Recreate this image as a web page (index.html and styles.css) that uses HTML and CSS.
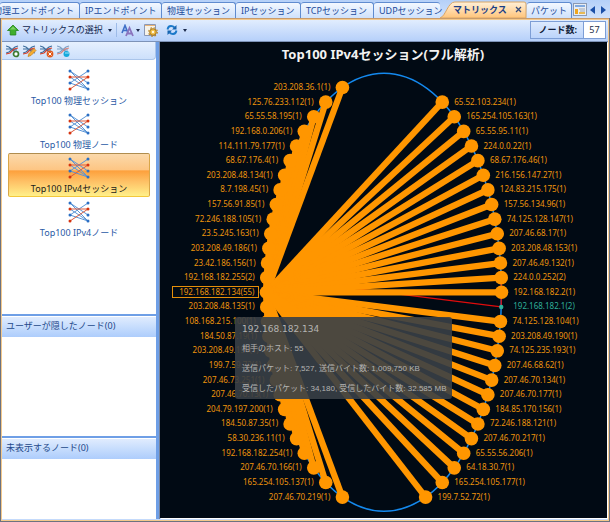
FILE: index.html
```html
<!DOCTYPE html>
<html lang="ja">
<head>
<meta charset="utf-8">
<title>マトリックス</title>
<link rel="stylesheet" href="styles.css">
</head>
<body>
<svg class="defs" aria-hidden="true">
  <symbol id="matrix" viewBox="0 0 22 22">
    <g fill="none" stroke="#5b95d6" stroke-width="1">
      <path d="M2 2 20 20M2 8 20 20M2 14 20 2M2 14 20 20M2 2 20 14"/>
      <path d="M2 8H20M2 20 20 8" stroke="#dc5a3c"/>
    </g>
    <g fill="#2b6fc4"><circle cx="2" cy="2" r="1.5"/><circle cx="20" cy="2" r="1.5"/><circle cx="2" cy="14" r="1.5"/><circle cx="20" cy="14" r="1.5"/><circle cx="20" cy="20" r="1.5"/></g>
    <g fill="#d6330f"><circle cx="2" cy="8" r="1.5"/><circle cx="20" cy="8" r="1.5"/><circle cx="2" cy="20" r="1.5"/></g>
  </symbol>
  <symbol id="mini" viewBox="0 0 14 14">
    <path d="M0 2 3 3 9 8 12 9M0 9 3 8 9 3 12 2M0 5 4 5 11 6" fill="none" stroke="#3d6d9c" stroke-width="1.1"/>
    <path d="M0 10 4 9 8 5 12 4" fill="none" stroke="#d8402a" stroke-width="1.2"/>
  </symbol>
</svg>
<div class="window">
  <nav class="tabs">
    <button class="tab first">物理エンドポイント</button>
    <button class="tab">IPエンドポイント</button>
    <button class="tab">物理セッション</button>
    <button class="tab">IPセッション</button>
    <button class="tab">TCPセッション</button>
    <button class="tab open">UDPセッション</button>
    <button class="tab active">
      <svg class="tab-shape" viewBox="0 0 88 17" preserveAspectRatio="none" aria-hidden="true">
        <defs><linearGradient id="tabFill" x1="0" y1="0" x2="0" y2="1"><stop offset="0" stop-color="#fff0d8"/><stop offset="1" stop-color="#ffc47a"/></linearGradient></defs>
        <path d="M0 17C6 15 8 1 15 1H85Q87 1 87 3V17Z" fill="url(#tabFill)" stroke="#d9a566"/>
      </svg>
      <span>マトリックス</span>
      <svg class="close" viewBox="0 0 7 7" aria-hidden="true"><path d="M1 1 6 6M6 1 1 6" stroke="#334a7c" stroke-width="1.3"/></svg>
    </button>
    <button class="tab packet">パケット</button>
    <button class="tab-list" aria-label="タブ一覧">
      <svg viewBox="0 0 14 13"><rect x=".5" y=".5" width="13" height="12" fill="#e9edf3" stroke="#8c9ab3"/><path d="M2 3H12" stroke="#7fa9e0" stroke-width="2"/><path d="M6 6H12M7 8H12" stroke="#9aa6b8"/><path d="M2 6H5V11H2Z" fill="#efa51e"/><path d="M6 10H12" stroke="#e8b954" stroke-width="2"/></svg>
    </button>
    <div class="scroll">
      <button aria-label="前へ"><svg viewBox="0 0 5 8"><path d="M5 0V8L0 4Z" fill="#1a4fa8"/></svg></button>
      <button aria-label="次へ"><svg viewBox="0 0 5 8"><path d="M0 0V8L5 4Z" fill="#1a4fa8"/></svg></button>
    </div>
  </nav>

  <div class="frame">
    <div class="toolbar">
      <button class="tool choose">
        <svg class="i12" viewBox="0 0 12 12" aria-hidden="true"><path d="M6 1 11.5 6.5H8.8V11H3.2V6.5H.5Z" fill="#3fae2b" stroke="#23831a" stroke-width=".8"/><path d="M6 2.5 9 5.5H3Z" fill="#7ed268"/></svg>
        <span>マトリックスの選択</span>
        <i class="caret"></i>
      </button>
      <i class="divider"></i>
      <button class="tool" aria-label="フォント">
        <svg class="i13" viewBox="0 0 13 13"><path d="M1 9 4 1.500 7 9M2 6.500H6" fill="none" stroke="#3f6fc7" stroke-width="1.600"/><path d="M5 12 8.500 4 12 12M6.500 9.500H11" fill="none" stroke="#8a74bd" stroke-width="1.800"/></svg>
        <i class="caret"></i>
      </button>
      <button class="tool" aria-label="設定">
        <svg class="i14" viewBox="0 0 14 14"><path d="M.5 1.500H11.500V12.500H.5Z" fill="#f6f3ea" stroke="#8b98b5"/><path d="M1 2.500H11" stroke="#e8b377"/><circle cx="9" cy="9" r="3.300" fill="#f0bd45" stroke="#a87519"/><circle cx="9" cy="9" r="4.300" fill="none" stroke="#b8862a" stroke-width="1.200" stroke-dasharray="1.700 1.700"/><circle cx="9" cy="9" r="1.200" fill="#fff6db"/></svg>
      </button>
      <button class="tool refresh" aria-label="更新">
        <svg class="i12" viewBox="0 0 12 12"><path d="M1.500 5.500Q2 2 5 2Q7 2 8.500 3.500M10.500 6.500Q10 10 7 10Q5 10 3.500 8.500" fill="none" stroke="#1b79c9" stroke-width="1.800"/><path d="M10.500 1V5.500H6ZM1.500 11V6.500H6Z" fill="#1664b0"/></svg>
        <i class="caret"></i>
      </button>
      <div class="count">
        <label for="nodes">ノード数:</label>
        <input id="nodes" type="text" value="57">
      </div>
    </div>

    <div class="main">
      <aside class="side">
        <div class="side-tools">
          <button aria-label="追加"><svg viewBox="0 0 14 14"><use href="#mini"/><circle cx="10" cy="10" r="2.500" fill="#fff" stroke="#3c7a31" stroke-width="1.700"/></svg></button>
          <button aria-label="編集"><svg viewBox="0 0 14 14"><use href="#mini"/><path d="M5 12.500 6 9.500 11 4.500 13 6.500 8 11.500Z" fill="#f4ad32" stroke="#c57b16" stroke-width=".7"/></svg></button>
          <button aria-label="削除"><svg viewBox="0 0 14 14"><use href="#mini"/><circle cx="10" cy="10" r="3.400" fill="#e25a1c"/><path d="M8.500 8.500 11.500 11.500M11.500 8.500 8.500 11.500" stroke="#fff"/></svg></button>
          <button aria-label="初期化"><svg viewBox="0 0 14 14"><use href="#mini" opacity=".6"/><circle cx="9.500" cy="10" r="3" fill="#13a9dc"/><path d="M8 9H12" stroke="#a8e6f7"/></svg></button>
        </div>
        <div class="list">
          <button class="item"><svg viewBox="0 0 22 22"><use href="#matrix"/></svg><span>Top100 物理セッション</span></button>
          <button class="item"><svg viewBox="0 0 22 22"><use href="#matrix"/></svg><span>Top100 物理ノード</span></button>
          <button class="item selected"><svg viewBox="0 0 22 22"><use href="#matrix"/></svg><span>Top100 IPv4セッション</span></button>
          <button class="item"><svg viewBox="0 0 22 22"><use href="#matrix"/></svg><span>Top100 IPv4ノード</span></button>
        </div>
        <section class="panel"><h2>ユーザーが隠したノード(0)</h2></section>
        <section class="panel"><h2>未表示するノード(0)</h2></section>
      </aside>

      <main class="chart">
        <svg id="chart" viewBox="160 42 447 476">
          <text class="chart-title" x="383" y="59">Top100 IPv4セッション(フル解析)</text>
        </svg>
        <div class="tip">
          <p class="host">192.168.182.134</p>
          <p>相手のホスト: 55</p>
          <p>送信パケット: 7,527, 送信バイト数: 1,009,750 KB</p>
          <p>受信したパケット: 34,180, 受信したバイト数: 32.585 MB</p>
        </div>
      </main>
    </div>
  </div>
</div>
<script src="script.js"></script>
</body>
</html>
```

FILE: styles.css
```css
* { box-sizing: border-box; }

body {
  margin: 0;
  font: 9px/12px "Noto Sans", "Noto Sans CJK JP", sans-serif;
  color: #1d4c9c;
}

button {
  margin: 0;
  padding: 0;
  border: 0;
  background: none;
  color: inherit;
  font: inherit;
  white-space: nowrap;
}

svg { display: block; }
.defs { display: none; }

.window {
  display: flex;
  flex-direction: column;
  height: 100vh;
  background: #c4dafb;
}

/* Tab strip */
.tabs {
  display: grid;
  grid-template-columns: 80fr 82fr 74fr 65fr 73fr 66fr 87fr 45fr 15fr 23fr;
  height: 18px;
  padding-top: 1px;
  background: linear-gradient(#b5d0f8, #cfe1fc);
}

.tab {
  position: relative;
  display: flex;
  align-items: center;
  min-width: 0;
  margin-top: 1px;
  padding: 0 0 0 5px;
  border: solid #5f8bcf;
  border-width: 1px 1px 0 0;
  border-radius: 3px 3px 0 0;
  background: linear-gradient(#f3f8ff, #cfe1fb);
}

.tab.first {
  justify-content: flex-end;
  padding: 0 5px 0 0;
  overflow: hidden;
}

.tab.open { border-right: 0; }

.tab.active {
  z-index: 1;
  margin-top: 0;
  padding-left: 13px;
  gap: 8px;
  border: 0;
  background: none;
  color: #1b3f86;
  font-weight: bold;
}

.tab.packet { padding-left: 4px; }

.tab-shape {
  position: absolute;
  inset: 0;
  width: 100%;
  height: 100%;
}

.tab span, .close { position: relative; }
.close { width: 7px; height: 7px; }

.tab-list { display: grid; place-items: center; }
.tab-list svg { width: 14px; height: 13px; }

.scroll {
  display: flex;
  align-items: center;
  justify-content: space-between;
  padding: 0 4px 0 3px;
}
.scroll svg { width: 5px; height: 8px; }

/* Framed content */
.frame {
  flex: 1;
  display: flex;
  flex-direction: column;
  min-height: 0;
  border: solid #6c7280;
  border-width: 0 1px 1px;
  outline: 1px solid #f4c98c;
  outline-offset: -2px;
}

.toolbar {
  display: flex;
  align-items: center;
  gap: 4px;
  height: 24px;
  padding: 1px 3px 1px 6px;
  border-top: 1px solid #c89b6c;
  border-bottom: 1px solid #7d93b8;
  background: linear-gradient(#e3eefe, #b6d0fa);
  color: #142850;
}

.tool { display: flex; align-items: center; gap: 2px; }
.choose { gap: 3px; }
.choose .caret { margin-left: 2px; }
.refresh { margin-left: 4px; gap: 5px; }

.i12 { width: 12px; height: 12px; }
.i13 { width: 13px; height: 13px; }
.i14 { width: 14px; height: 14px; }

.caret {
  border: solid transparent;
  border-width: 3px 2px 0;
  border-top-color: #1c2b4d;
}

.divider { width: 1px; height: 14px; background: #9dbbe8; }

.count {
  display: flex;
  align-items: stretch;
  height: 18px;
  margin-left: auto;
  border: 1px solid #7d9ed6;
}

.count label {
  padding: 2px 6px 0 7px;
  color: #101c38;
  font-weight: bold;
}

.count input {
  width: 22px;
  padding: 0;
  border: 0;
  border-left: 1px solid #7d9ed6;
  background: #fff;
  color: #26314a;
  font: inherit;
  text-align: center;
}

.main {
  flex: 1;
  display: grid;
  grid-template-columns: 159px 1fr;
  min-height: 0;
}

/* Sidebar */
.side {
  display: grid;
  grid-template-rows: 18px 254fr 122fr 83fr;
  min-height: 0;
  margin-bottom: 2px;
  padding-left: 1px;
  border-right: 1px solid #77839a;
  background: #fff;
  box-shadow: inset -3px 0 #6f9fe6;
  padding-right: 3px;
}

.side-tools {
  display: flex;
  align-items: center;
  gap: 3px;
  padding-left: 4px;
  border-right: 1px solid #aac5ea;
  border-bottom: 1px solid #aac5ea;
  border-radius: 0 0 4px 0;
  background: linear-gradient(#e6f0fe, #cde0fb);
}

.side-tools svg { width: 14px; height: 14px; }

.list {
  display: flex;
  flex-direction: column;
  padding: 5px 6px;
}

.item {
  display: flex;
  flex-direction: column;
  align-items: center;
  gap: 4px;
  height: 44px;
  padding-top: 3px;
  border: 1px solid transparent;
  border-radius: 2px;
  color: #2a5aa5;
}

.item svg { width: 22px; height: 22px; }

.item.selected {
  border-color: #b08d4e #d9a648 #f4c83c;
  background: linear-gradient(#fbd9ab 0%, #fdc583 38%, #fda03c 40%, #fec065 65%, #fff08a 100%);
  color: #1a1a1a;
}

.panel {
  border-top: 2px solid #6f9fe6;
  background: #fff;
}

.panel h2 {
  height: 20px;
  margin: 1px 0 0;
  padding: 3px 4px;
  background: linear-gradient(#e0ecfe, #adcdfc);
  color: #24498a;
  font-size: 9px;
  font-weight: normal;
}

/* Chart */
.chart {
  position: relative;
  min-height: 0;
  margin: 0 2px 3px 0;
  background: #010a14;
  box-shadow: 1px 1px #fff;
}

#chart { width: 100%; height: 100%; }

.chart-title {
  fill: #f2f2f2;
  font-size: 13px;
  font-weight: bold;
  text-anchor: middle;
}

.ring { fill: none; stroke: #1489ee; stroke-width: 1.5; }
.link { stroke: #ff9600; stroke-width: 6.3; }
.weak { stroke: #e00c0c; stroke-width: 1.3; }
.node { fill: #ff9600; }
.node.small { fill: #2eb39c; }
.label { fill: #ee950c; font-size: 8px; }
.label.left { text-anchor: end; }
.label.small { fill: #2fae98; }
.focus { fill: none; stroke: #e58f0a; }

.tip {
  position: absolute;
  left: 75px;
  top: 275px;
  display: flex;
  flex-direction: column;
  gap: 8px;
  padding: 6px 5px 4px 7px;
  border-radius: 3px;
  background: rgba(57, 63, 70, 0.9);
  color: #b4b4b2;
  font: 8px/12px "Liberation Sans", "Noto Sans CJK JP", sans-serif;
  white-space: nowrap;
}

.tip p { margin: 0; }
.tip .host { font: 9px/12px "DejaVu Sans", sans-serif; }
```

FILE: script.js
```js
const left = [
  "203.208.36.1(1)", "125.76.233.112(1)", "65.55.58.195(1)", "192.168.0.206(1)",
  "114.111.79.177(1)", "68.67.176.4(1)", "203.208.48.134(1)", "8.7.198.45(1)",
  "157.56.91.85(1)", "72.246.188.105(1)", "23.5.245.163(1)", "203.208.49.186(1)",
  "23.42.186.156(1)", "192.168.182.255(2)", "192.168.182.134(55)", "203.208.48.135(1)",
  "108.168.215.100(1)", "184.50.87.19(1)", "203.208.49.191(1)", "199.7.59.72(1)",
  "207.46.73.251(1)", "207.46.70.13(1)", "204.79.197.200(1)", "184.50.87.35(1)",
  "58.30.236.11(1)", "192.168.182.254(1)", "207.46.70.166(1)", "165.254.105.137(1)",
  "207.46.70.219(1)"
];
const right = [
  "65.52.103.234(1)", "165.254.105.163(1)", "65.55.95.11(1)", "224.0.0.22(1)",
  "68.67.176.46(1)", "216.156.147.27(1)", "124.83.215.175(1)", "157.56.134.96(1)",
  "74.125.128.147(1)", "207.46.68.17(1)", "203.208.48.153(1)", "207.46.49.132(1)",
  "224.0.0.252(2)", "192.168.182.2(1)", "192.168.182.1(2)", "74.125.128.104(1)",
  "203.208.49.190(1)", "74.125.235.193(1)", "207.46.68.62(1)", "207.46.70.134(1)",
  "207.46.70.177(1)", "184.85.170.156(1)", "72.246.188.121(1)", "207.46.70.217(1)",
  "65.55.56.206(1)", "64.18.30.7(1)", "165.254.105.177(1)", "199.7.52.72(1)"
];

const svg = document.getElementById("chart");
const ring = { cx: 384, cy: 292.3, rx: 117.5, ry: 219 };
const step = 14.63;

function add(tag, attrs, text) {
  const el = document.createElementNS("http://www.w3.org/2000/svg", tag);
  for (const key in attrs) el.setAttribute(key, attrs[key]);
  if (text) el.textContent = text;
  svg.appendChild(el);
}

function place(side, row, name) {
  const y = ring.cy + (row - 14) * step;
  const t = (y - ring.cy) / ring.ry;
  return { side, name, y, x: ring.cx + side * ring.rx * Math.sqrt(1 - t * t) };
}

// The right column starts one row lower, and its last node closes the ring.
const nodes = left.map((name, i) => place(-1, i, name))
  .concat(right.map((name, i) => place(1, i + 1, name)));
const find = name => nodes.find(n => n.name === name);
const hub = find("192.168.182.134(55)");
const small = find("192.168.182.1(2)");
const line = (a, b, cls) => add("line", { x1: a.x, y1: a.y, x2: b.x, y2: b.y, class: cls });

add("ellipse", { ...ring, class: "ring" });
line(find("192.168.182.255(2)"), small, "weak");
line(find("224.0.0.252(2)"), small, "weak");
nodes.filter(n => n !== hub && n !== small).forEach(n => line(hub, n, "link"));
nodes.forEach(n => {
  const extra = n === small ? " small" : "";
  add("circle", { cx: n.x, cy: n.y, r: n === small ? 2.2 : 6.8, class: "node" + extra });
  add("text", {
    x: n.x + n.side * 12, y: n.y + 2.5,
    class: "label" + extra + (n.side < 0 ? " left" : "")
  }, n.name);
});
add("rect", { x: 172.5, y: 286.5, width: 86, height: 11, class: "focus" });
```
